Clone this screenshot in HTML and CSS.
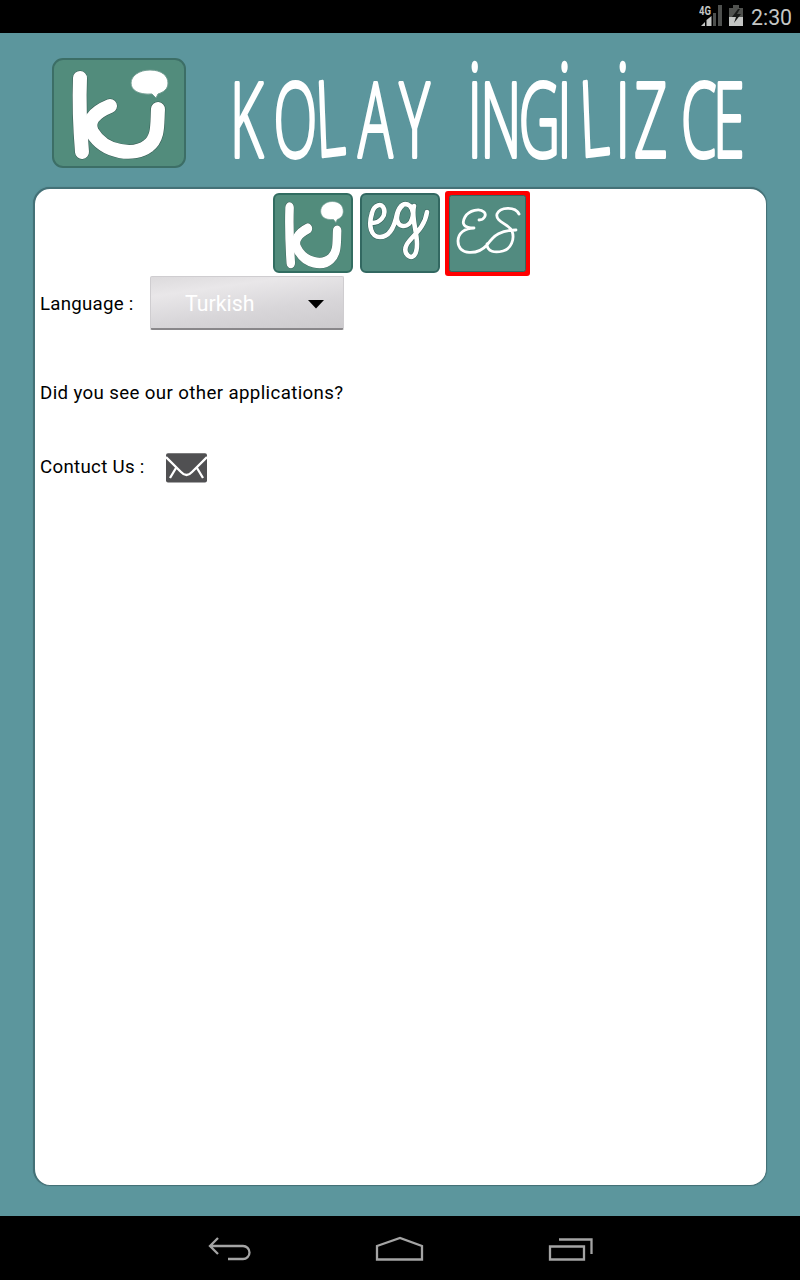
FILE: index.html
```html
<!DOCTYPE html>
<html lang="en">
<head>
<meta charset="utf-8">
<title>Kolay İngilizce</title>
<link rel="stylesheet" href="styles.css">
</head>
<body>
<div class="screen">
  <div class="status">
    <svg class="signal" width="24" height="33" viewBox="0 0 24 33">
      <path d="M14 26V13h3v13zM19 26V5h4v21z" fill="#4e504e"/>
      <path d="M2 26l4-4v4zM7.500 26v-6l5-4v10z" fill="#c4c6c4"/>
      <text x="0" y="15" class="network" textLength="12" lengthAdjust="spacingAndGlyphs">4G</text>
    </svg>
    <svg class="battery" width="14" height="33" viewBox="0 0 14 33">
      <path d="M0 8h4V5h6v3h4v9H0z" fill="#50524f"/>
      <path d="M0 17h14v9H0z" fill="#c4c6c4"/>
      <path d="M9 9L3 17h4l-2 6 7-9H8l3-5z" fill="#181a18"/>
    </svg>
    <span class="clock">2:30</span>
  </div>
  <main class="app">
    <header class="brand">
      <svg class="logo" viewBox="0 0 134 110" width="134" height="110">
        <rect x="1" y="1" width="132" height="108" rx="10" fill="#528c7c" stroke="#3c6e66" stroke-width="2"/>
        <use href="#ki"/>
      </svg>
      <svg class="title" width="530" height="110" viewBox="0 0 530 110">
        <text class="wordmark" transform="translate(0 99) scale(.55 1)" x="0 79 158 233 308 380 432 455 525 595 638 701 735 820 878" rotate="0 0 -4 0 0 0 0 0 0 0 -4 0 0 0 0">KOLAY İNGİLİZCE</text>
      </svg>
    </header>
    <section class="panel">
      <div class="apps">
        <svg class="tile" viewBox="0 0 80 80" width="80" height="80">
          <defs>
            <g id="ki">
              <g fill="none" stroke-linecap="round" stroke-linejoin="round">
                <g stroke="#365b53" stroke-width="15">
                  <path d="M28 20C27 45 28 70 30 94"/>
                  <path d="M58 48C41 55 35 64 40 74C53 96 83 98 96 88C107 80 105 66 106 51"/>
                </g>
                <g stroke="#fff" stroke-width="14">
                  <path d="M28 20C27 45 28 70 30 94"/>
                  <path d="M58 48C41 55 35 64 40 74C53 96 83 98 96 88C107 80 105 66 106 51"/>
                </g>
              </g>
              <path d="M98 12c12 0 18 6 18 13 0 6-4 9-10 11l-2 4-4-4c-14 1-21-4-21-11 0-7 8-13 19-13z" fill="#fff" stroke="#6f9b90"/>
            </g>
          </defs>
          <rect x="1" y="1" width="78" height="78" rx="5" fill="#528c7c" stroke="#326d61" stroke-width="2"/>
          <use href="#ki" transform="translate(-.5 -.5) scale(.61 .75)"/>
        </svg>
        <svg class="tile" viewBox="0 0 80 80" width="80" height="80">
          <rect x="1" y="1" width="78" height="78" rx="5" fill="#528b80" stroke="#326861" stroke-width="2"/>
          <g fill="none" stroke-linecap="round" stroke-linejoin="round">
            <path d="M12 30C20 30 26 23 24 16C22 9 14 12 12 20C8 33 11 44 20 44C31 44 35 31 37 21C40 11 45 9 50 13C56 19 52 34 43 33C34 32 36 18 43 12M54 13C51 24 57 38 57 51C57 65 50 67 46 60C41 48 64 41 67 19" stroke="#345f58" stroke-width="5.500"/>
            <path d="M12 30C20 30 26 23 24 16C22 9 14 12 12 20C8 33 11 44 20 44C31 44 35 31 37 21C40 11 45 9 50 13C56 19 52 34 43 33C34 32 36 18 43 12M54 13C51 24 57 38 57 51C57 65 50 67 46 60C41 48 64 41 67 19" stroke="#fff" stroke-width="4.600"/>
          </g>
        </svg>
        <div class="selected">
          <svg class="tile-es" viewBox="0 0 77 77" width="77" height="77">
            <rect x=".5" y=".5" width="76" height="76" rx="2" fill="#528b80" stroke="#326861"/>
            <path d="M30 25C35 25 38 20 35 17C31 13 20 15 16 22C12 29 15 33 25 33C16 33 9 38 9 46C9 61 29 60 38 50C45 40 52 35 67 35M70 19C66 11 51 12 48 19C46 27 60 29 63 36C66 44 62 54 54 56C46 58 38 57 38 49" fill="none" stroke="#fff" stroke-width="2.800" stroke-linecap="round" stroke-linejoin="round"/>
          </svg>
        </div>
      </div>
      <div class="row language">
        <span class="label">Language :</span>
        <div class="select"><span>Turkish</span>
          <svg width="16" height="9" viewBox="0 0 16 9"><path d="M0 0h16L8 8.500z"/></svg>
        </div>
      </div>
      <div class="row other"><span class="label">Did you see our other applications?</span></div>
      <div class="row contact">
        <span class="label">Contuct Us :</span>
        <svg class="mail" width="41" height="30" viewBox="0 0 41 30">
          <rect y=".3" width="41" height="29.200" rx="2" fill="#505052"/>
          <path d="M0 4L15 19Q20.500 25 26 19L41 4M10 15L4 25M31 15L37 25" fill="none" stroke="#fff" stroke-width="2.300"/>
        </svg>
      </div>
    </section>
  </main>
  <nav class="navbar">
    <svg width="44" height="26" viewBox="0 0 44 26"><path d="M10 2L2 10l8 8M2 10h33a6.500 6.500 0 0 1 0 13H20"/></svg>
    <svg width="50" height="26" viewBox="0 0 50 26"><path d="M2 10L25 2l22 8v13.500H2z"/></svg>
    <svg width="46" height="26" viewBox="0 0 46 26"><path d="M2 10.500h34v13H2zM11 3.500h32.500V18"/></svg>
  </nav>
</div>
</body>
</html>
```
FILE: styles.css
```css
* { box-sizing: border-box; }
body { margin: 0; background: #000; font-family: Roboto, "Liberation Sans", sans-serif; }
svg { display: block; flex: none; }
.screen { width: 800px; height: 1280px; display: flex; flex-direction: column; }
.status { height: 33px; background: #000; display: flex; justify-content: flex-end; padding-right: 8px; }
.signal { margin-right: 6px; }
.network { font: bold 12px Roboto, sans-serif; fill: #c4c6c4; }
.clock { margin-left: 8px; width: 41px; color: #c4c6c4; font-size: 21.300px; line-height: 35px; white-space: nowrap; }
.app { flex: 1; background: #5c969d; padding: 25px 33px 30px; display: flex; flex-direction: column; }
.brand { height: 129px; display: flex; padding-left: 19px; }
.title { margin-left: 44px; overflow: visible; }
.wordmark { font-family: "Open Sans", sans-serif; font-size: 104px; font-weight: 300; fill: #fff; stroke: #fff; stroke-width: 4px; stroke-linejoin: round; }
.panel { flex: 1; background: #fff; border: 1px solid #447177; border-width: 2px 1px 1px 2px; border-radius: 17px; padding: 2px 5px; box-shadow: 0 0 1px #447177; }
.apps { height: 85px; display: flex; gap: 7px; padding-left: 233px; }
.tile { margin-top: 2px; }
.selected { margin-left: -2px; width: 85px; height: 85px; background: #f00; border-radius: 3px; display: flex; align-items: center; justify-content: center; }
.row { display: flex; align-items: center; }
.label { font-size: 18.700px; line-height: 24px; letter-spacing: .37px; white-space: nowrap; color: #000; }
.language { height: 54px; }
.language .label { width: 110px; padding-top: 2px; letter-spacing: .25px; }
.select { width: 194px; height: 54px; border-radius: 2px; border: 1px solid #cfcdd0; border-bottom: 2px solid #89878a; background: linear-gradient(172deg, #dcdadc, #e9e7e9 25%, #d8d6d9 62%, #cccacd); color: #fff; font-size: 21.300px; display: flex; justify-content: space-between; align-items: center; padding: 2px 19px 0 34px; }
.select svg { margin-top: 2px; }
.other { margin-top: 51px; height: 24px; }
.contact { margin-top: 47px; height: 30px; }
.contact .label { width: 126px; letter-spacing: .3px; }
.mail { margin-top: 2px; }
.navbar { height: 64px; background: #000; display: flex; padding: 20px 0 0 208px; }
.navbar svg:nth-child(2) { margin-left: 123px; }
.navbar svg:nth-child(3) { margin-left: 123px; }
.navbar path { fill: none; stroke: #a4a4a4; stroke-width: 2.300; }
```
